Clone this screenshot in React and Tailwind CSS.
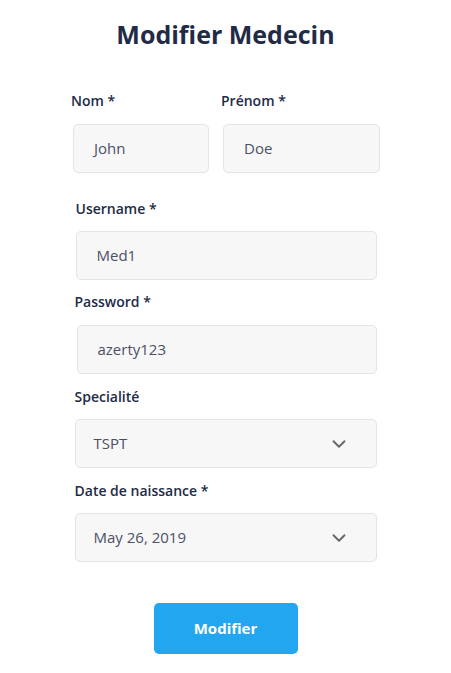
import { ChevronDown } from 'lucide-react'

const font = { fontFamily: '"Open Sans", "Liberation Sans", sans-serif' }

function Label({ children, className = '' }) {
  return (
    <div className={`h-5 leading-5 text-[14px] font-semibold text-[#222b45] ${className}`}>{children}</div>
  )
}

function Box({ children, className = '', chevron = false }) {
  return (
    <div className={`h-[49px] flex items-center justify-between rounded-[5px] border border-[#e4e4e4] bg-[#f7f7f7] pr-[26px] text-[15px] text-[#4b5165] ${chevron ? 'pl-[18px]' : 'pl-5'} ${className}`}>
      <span>{children}</span>
      {chevron && <ChevronDown size={22} strokeWidth={2} className="text-[#666]" />}
    </div>
  )
}

export default function App() {
  return (
    <div className="min-h-[673px] w-[451px] bg-white" style={font}>
      <h1 className="pt-[18px] text-center text-[25px] leading-8 font-bold text-[#222b45]">Modifier Medecin</h1>

      <div className="mt-[41px] ml-[71px] flex w-[309px]">
        <div className="w-[150px]">
          <Label>Nom *</Label>
          <Box className="mt-[13px] ml-[2px] w-[136px]">John</Box>
        </div>
        <div className="flex-1">
          <Label>Prénom *</Label>
          <Box className="mt-[13px] ml-[2px]">Doe</Box>
        </div>
      </div>

      <div className="mx-auto mt-[26px] w-[302px]">
        <Label className="ml-[1px]">Username *</Label>
        <Box className="mt-[12px] ml-[1px]">Med1</Box>

        <Label className="mt-[12px]">Password *</Label>
        <Box className="mt-[13px] ml-[2px]">azerty123</Box>

        <Label className="mt-[13px]">Specialité</Label>
        <Box className="mt-[12px]" chevron>TSPT</Box>

        <Label className="mt-[13px]">Date de naissance *</Label>
        <Box className="mt-[12px]" chevron>May 26, 2019</Box>
      </div>

      <div className="mt-[41px] flex justify-center">
        <button className="h-[51px] w-[144px] rounded-[5px] bg-[#22a6f0] text-[15px] font-bold text-white">Modifier</button>
      </div>
    </div>
  )
}
